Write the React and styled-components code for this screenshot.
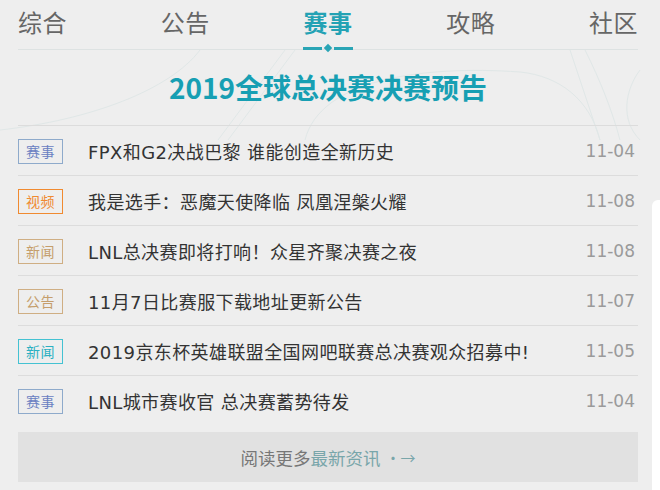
import React from "react"
import styled, { createGlobalStyle } from "styled-components"

const GlobalStyle = createGlobalStyle`
  html, body {
    margin: 0;
    padding: 0;
    background: #eeeeee;
  }
  body {
    width: 660px;
    height: 490px;
    overflow: hidden;
    font-family: "DejaVu Sans", "Noto Sans CJK SC", sans-serif;
  }
`

const Page = styled.div`
  position: relative;
  width: 660px;
  height: 490px;
  overflow: hidden;
  background: #eeeeee;
`

const Decor = styled.svg`
  position: absolute;
  left: 0;
  top: 40px;
  width: 660px;
  height: 100px;
  pointer-events: none;
`

const SidePanel = styled.div`
  position: absolute;
  left: 652px;
  top: 200px;
  width: 20px;
  height: 300px;
  background: #ffffff;
  border-top-left-radius: 6px;
`

const Content = styled.div`
  position: relative;
  width: 620px;
  margin-left: 18px;
  display: flex;
  flex-direction: column;
`

const Tabs = styled.nav`
  position: relative;
  height: 49px;
  display: flex;
  justify-content: space-between;
  align-items: flex-start;
  border-bottom: 1px solid #dde2e2;
`

const Tab = styled.div`
  position: relative;
  font-family: "Noto Sans CJK SC", sans-serif;
  font-size: 24px;
  line-height: 44px;
  letter-spacing: 0.5px;
  color: ${p => (p.$active ? "#23a2b4" : "#666666")};
  font-weight: ${p => (p.$active ? 700 : 400)};
`

const Indicator = styled.span`
  position: absolute;
  left: 50%;
  bottom: -7px;
  transform: translateX(-50%);
  display: flex;
  align-items: center;
  gap: 2px;
`

const Dash = styled.i`
  display: block;
  width: 19px;
  height: 3px;
  background: #2aa5b5;
`

const Diamond = styled.i`
  display: block;
  width: 6px;
  height: 6px;
  margin: 0 1px;
  background: #2aa5b5;
  transform: rotate(45deg);
`

const Headline = styled.h1`
  margin: 0;
  height: 75px;
  display: flex;
  align-items: center;
  justify-content: center;
  padding-bottom: 2px;
  box-sizing: border-box;
  font-family: "Noto Sans CJK SC", sans-serif;
  font-size: 28px;
  font-weight: 700;
  color: #179fb3;
`

const List = styled.ul`
  list-style: none;
  margin: 0;
  padding: 0;
`

const Row = styled.li`
  height: 50px;
  display: flex;
  align-items: center;
  border-top: 1px solid #dcdcdc;
  box-sizing: border-box;
`

const badgeColors = {
  blue: { border: "#8eaacb", text: "#6a80c2" },
  orange: { border: "#f08a30", text: "#f08a30" },
  tan: { border: "#cfae83", text: "#c59e6c" },
  cyan: { border: "#44c2d2", text: "#2ab0c2" },
}

const Badge = styled.span`
  flex: none;
  width: 45px;
  height: 25px;
  box-sizing: border-box;
  display: flex;
  align-items: center;
  justify-content: center;
  border: 1px solid ${p => badgeColors[p.$tone].border};
  color: ${p => badgeColors[p.$tone].text};
  font-family: "Noto Sans CJK SC", sans-serif;
  font-size: 14px;
  letter-spacing: 0.5px;
  margin-top: 1px;
`

const Title = styled.span`
  flex: 1;
  margin-left: 25px;
  font-size: 18px;
  letter-spacing: 0.4px;
  color: #333333;
  white-space: nowrap;
`

const Date = styled.span`
  flex: none;
  font-family: "DejaVu Sans", sans-serif;
  font-size: 17px;
  color: #9a9a9a;
  margin-right: 3px;
`

const More = styled.a`
  margin-top: 7px;
  height: 50px;
  display: flex;
  align-items: center;
  justify-content: center;
  background: #e1e1e1;
  font-family: "Noto Sans CJK SC", sans-serif;
  font-size: 17.5px;
  color: #777777;
  text-decoration: none;
`

const Accent = styled.span`
  color: #79a6aa;
`

const Arrow = styled.span`
  margin-left: 5px;
  font-size: 15px;
  color: #79a6aa;
`

const tabs = ["综合", "公告", "赛事", "攻略", "社区"]

const news = [
  { tag: "赛事", tone: "blue", title: "FPX和G2决战巴黎 谁能创造全新历史", date: "11-04" },
  { tag: "视频", tone: "orange", title: "我是选手：恶魔天使降临 凤凰涅槃火耀", date: "11-08" },
  { tag: "新闻", tone: "tan", title: "LNL总决赛即将打响！众星齐聚决赛之夜", date: "11-08" },
  { tag: "公告", tone: "tan", title: "11月7日比赛服下载地址更新公告", date: "11-07" },
  { tag: "新闻", tone: "cyan", title: "2019京东杯英雄联盟全国网吧联赛总决赛观众招募中!", date: "11-05" },
  { tag: "赛事", tone: "blue", title: "LNL城市赛收官 总决赛蓄势待发", date: "11-04" },
]

const App = () => (
  <Page>
    <GlobalStyle />
    <Decor viewBox="0 0 660 100">
      <g fill="none" stroke="#e0e7e7" strokeWidth="1">
        <path d="M0 90 C 90 80, 170 50, 200 10" />
        <path d="M218 100 L 285 10" />
        <path d="M228 100 L 295 10" />
        <path d="M305 100 C 320 40, 420 25, 520 32 C 560 36, 590 60, 600 100" />
        <path d="M570 10 C 580 40, 590 70, 600 100" />
        <path d="M585 10 C 600 40, 612 70, 620 100" />
        <path d="M640 30 C 625 50, 620 80, 640 100" />
      </g>
    </Decor>
    <SidePanel />
    <Content>
      <Tabs>
        {tabs.map(t => (
          <Tab key={t} $active={t === "赛事"}>
            {t}
            {t === "赛事" && (
              <Indicator>
                <Dash />
                <Diamond />
                <Dash />
              </Indicator>
            )}
          </Tab>
        ))}
      </Tabs>
      <Headline>2019全球总决赛决赛预告</Headline>
      <List>
        {news.map((n, i) => (
          <Row key={i}>
            <Badge $tone={n.tone}>{n.tag}</Badge>
            <Title>{n.title}</Title>
            <Date>{n.date}</Date>
          </Row>
        ))}
      </List>
      <More href="#">
        阅读更多<Accent>最新资讯</Accent>
        <Arrow>·→</Arrow>
      </More>
    </Content>
  </Page>
)

export default App
